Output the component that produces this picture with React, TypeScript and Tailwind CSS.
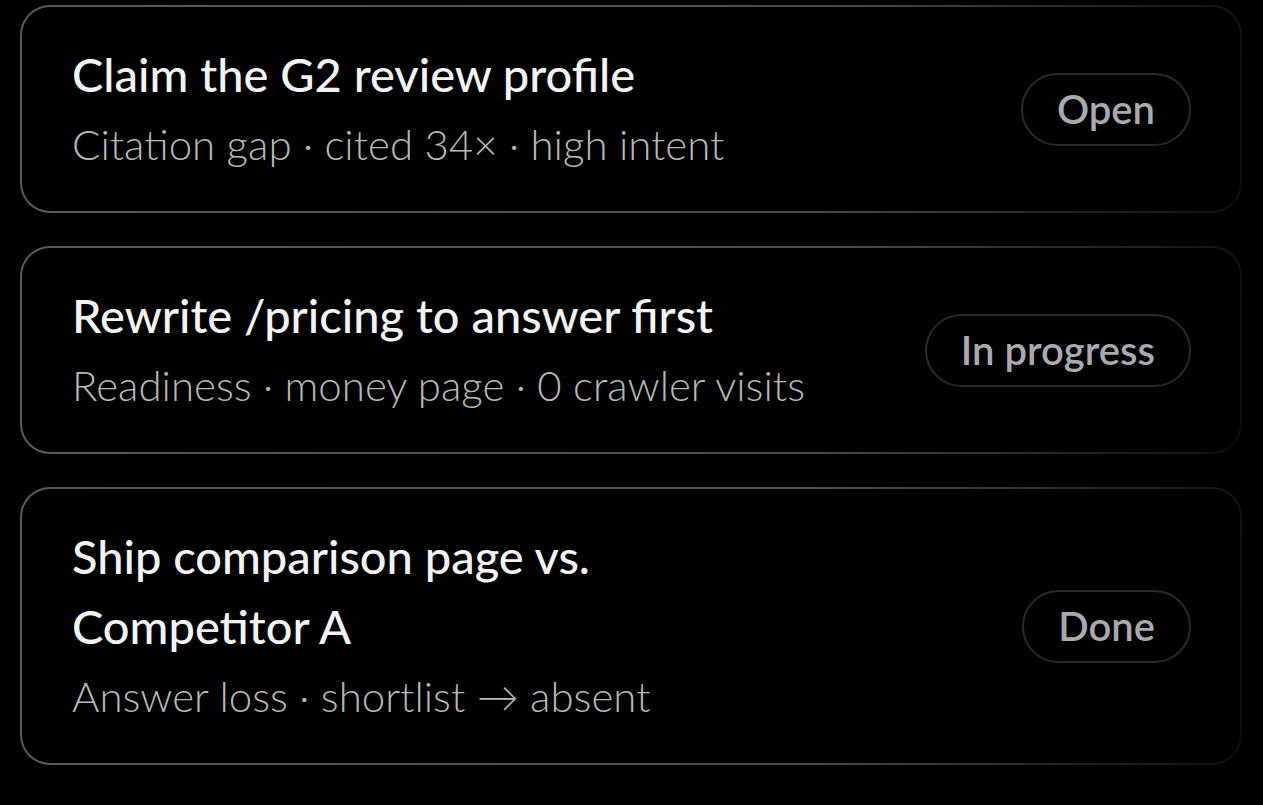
const tasks = [
  {
    title: "Claim the G2 review profile",
    meta: "Citation gap · cited 34× · high intent",
    status: "Open",
  },
  {
    title: "Rewrite /pricing to answer first",
    meta: "Readiness · money page · 0 crawler visits",
    status: "In progress",
  },
  {
    title: "Ship comparison page vs. Competitor A",
    meta: "Answer loss · shortlist → absent",
    status: "Done",
  },
]

function TaskCard({ title, meta, status }: { title: string; meta: string; status: string }) {
  return (
    // gradient wrapper draws the fading border
    <div className="rounded-[30px] p-[2px] bg-[linear-gradient(100deg,#5a5a5a_0%,#4c4c4c_65%,#262626_85%,#0e0e0e_100%)]">
      <div className="flex items-center justify-between rounded-[28px] bg-black pl-[50px] pr-[49px] py-[32px]">
        <div className="max-w-[750px]">
          <h3 className="text-[47px] leading-[70px] font-medium text-[#f3f3f3]">
            {title}
          </h3>
          <p className="text-[42px] leading-[70px] font-light text-[#b8b8b8]">
            {meta}
          </p>
        </div>
        <span className="shrink-0 h-[73px] flex items-center rounded-full border-2 border-[#2a2a2a] px-[34px] text-[40px] font-semibold text-[#a9a9ae]">
          {status}
        </span>
      </div>
    </div>
  )
}

export default function App() {
  return (
    <div
      className="min-h-screen bg-black pt-[5px] pl-5 pr-[21px] flex flex-col gap-[33px]"
      style={{ fontFamily: "Lato, 'Noto Sans', sans-serif" }}
    >
      {tasks.map((t) => (
        <TaskCard key={t.title} {...t} />
      ))}
    </div>
  )
}
